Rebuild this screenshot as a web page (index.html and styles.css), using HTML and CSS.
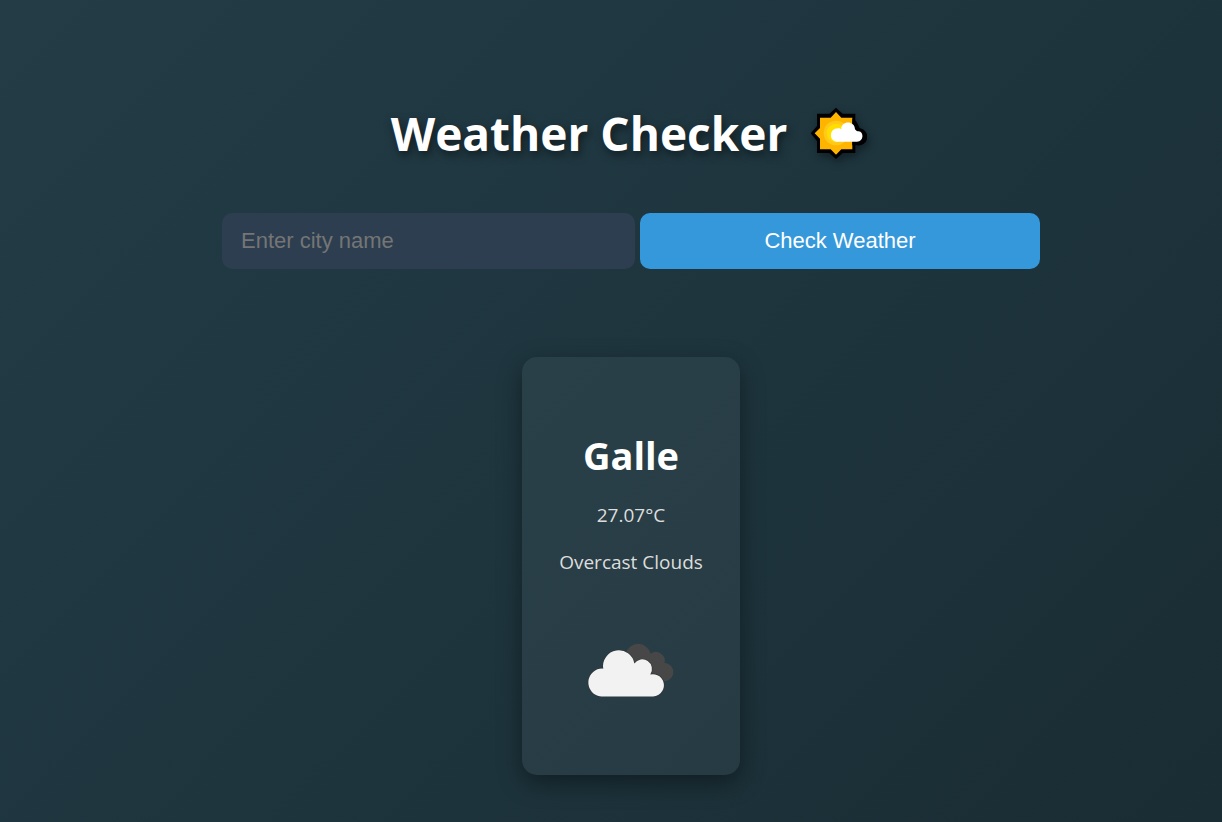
FILE: index.html
```html
<!DOCTYPE html>
<html lang="en">
<head>
<meta charset="utf-8">
<meta name="viewport" content="width=device-width, initial-scale=1">
<title>Weather Checker</title>
<link rel="stylesheet" href="styles.css">
</head>
<body>
<main class="app">
  <h1 class="title">
    <span>Weather Checker</span>
    <svg class="title-icon" viewBox="56 46 174 162" aria-hidden="true">
      <path d="M137 51L157 69H195V106L215 128L195 151V187H157L137 205L117 187H80V151L61 128L80 106V69H117Z" fill="#000"/>
      <path d="M137 64L153 81H186V112L201 128L186 144V176H153L137 192L121 176H89V144L73 128L89 112V81H121Z" fill="#ffb400"/>
      <path d="M186 84V112L200 128L186 144V164H200A22 22 0 0 0 210 113C204 112 204 90 186 84Z" fill="#000"/>
      <circle cx="137" cy="127" r="37" fill="#ffc91a"/>
      <circle cx="137" cy="127" r="28" fill="#ffde00"/>
      <path d="M140 153C116 153 114 113 144 113C149 113 150 114 153 116C151 90 193 88 194 116C198 121 201 122 205 122C221 123 221 153 200 153Z" fill="#fff"/>
    </svg>
  </h1>
  <form class="search">
    <input class="city" type="text" placeholder="Enter city name" aria-label="City name">
    <button class="check" type="button">Check Weather</button>
  </form>
  <section class="card">
    <h2 class="place">Galle</h2>
    <p class="detail">27.07°C</p>
    <p class="detail">Overcast Clouds</p>
    <svg class="weather-icon" viewBox="50 65 266 170" role="img" aria-label="Overcast clouds">
      <path d="M167 105A38 38 0 0 1 241 105A26 26 0 0 1 282 132A27 27 0 1 1 274 185L200 160Z" fill="#484748"/>
      <path d="M95 231A41 41 0 0 1 101 149A46 46 0 0 1 193 134A28 28 0 0 1 240 166A33 33 0 1 1 244 231Z" fill="none" stroke="#303638" stroke-width="4"/>
      <path d="M95 231A41 41 0 0 1 101 149A46 46 0 0 1 193 134A28 28 0 0 1 240 166A33 33 0 1 1 244 231Z" fill="#f2f2f2"/>
    </svg>
  </section>
</main>
</body>
</html>
```
FILE: styles.css
```css
* {
  box-sizing: border-box;
}

body {
  margin: 0;
  min-height: 100vh;
  background: linear-gradient(135deg, #233c46, #1e353e 50%, #1a2c34);
  color: #fff;
  font-family: "Segoe UI", "Open Sans", "Noto Sans", sans-serif;
}

.app {
  display: flex;
  flex-direction: column;
  align-items: center;
  padding: 97px 0 48px 40px;
}

.title {
  display: flex;
  align-items: center;
  gap: 22px;
  margin: 0 0 44px;
  padding-right: 4px;
  font-size: 46px;
  line-height: 72px;
  text-shadow: 2px 4px 8px rgba(0, 0, 0, 0.5);
}

.title-icon {
  width: 58px;
  height: 54px;
  filter: drop-shadow(2px 4px 4px rgba(0, 0, 0, 0.4));
}

.search {
  display: grid;
  grid-template-columns: 413fr 400fr;
  gap: 5px;
  width: 100%;
  max-width: 818px;
  margin-bottom: 88px;
}

.city,
.check {
  min-width: 0;
  height: 56px;
  border: 0;
  border-radius: 10px;
  color: #fff;
  font-family: "Liberation Sans", Arial, sans-serif;
  font-size: 22px;
}

.city {
  padding: 0 19px;
  background: #2c3e50;
}

.city::placeholder {
  color: #757575;
}

.check {
  background: #3498db;
  cursor: pointer;
}

.card {
  display: flex;
  flex-direction: column;
  align-items: center;
  min-width: 218px;
  padding: 71px 32px 73px;
  border-radius: 15px;
  background: rgba(255, 255, 255, 0.05);
  box-shadow: 0 8px 24px rgba(0, 0, 0, 0.4);
}

.place {
  margin: 0 0 19px;
  font-size: 38px;
  line-height: 54px;
}

.detail {
  margin: 0 0 19px;
  color: #ddd;
  font-size: 19px;
  line-height: 28px;
}

.weather-icon {
  width: 90px;
  height: 58px;
  margin: 45px 0 4px;
}
```
